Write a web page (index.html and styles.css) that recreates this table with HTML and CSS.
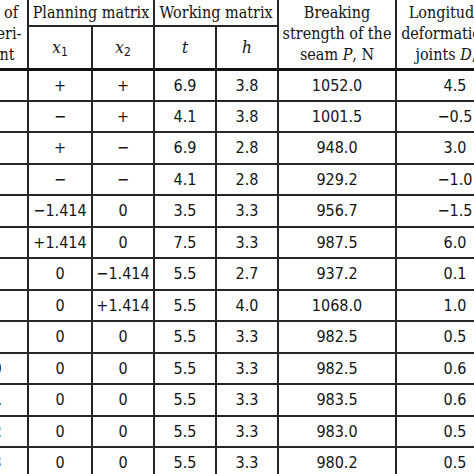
FILE: index.html
```html
<!DOCTYPE html>
<html>
<head>
<meta charset="utf-8">
<link rel="stylesheet" href="styles.css">
</head>
<body>
<table class="tbl">
  <colgroup>
    <col class="c-no"><col class="c-s"><col class="c-s2"><col class="c-s2"><col class="c-s2"><col class="c-w"><col class="c-w">
  </colgroup>
  <thead>
    <tr class="h1">
      <th rowspan="2" class="hd">No. of<br>experi-<br>ment</th>
      <th colspan="2" class="hd">Planning matrix</th>
      <th colspan="2" class="hd">Working matrix</th>
      <th rowspan="2" class="hd">Breaking<br>strength of the<br>seam <i>P</i>, N</th>
      <th rowspan="2" class="hd">Longitudinal<br>deformation of<br>joints <i>D</i>, %</th>
    </tr>
    <tr class="h2">
      <th class="var"><i>x</i><sub>1</sub></th>
      <th class="var"><i>x</i><sub>2</sub></th>
      <th class="var"><i>t</i></th>
      <th class="var"><i>h</i></th>
    </tr>
  </thead>
  <tbody>
    <tr><td class="num">1</td><td>+</td><td>+</td><td>6.9</td><td>3.8</td><td>1052.0</td><td>4.5</td></tr>
    <tr><td class="num">2</td><td>−</td><td>+</td><td>4.1</td><td>3.8</td><td>1001.5</td><td>−0.5</td></tr>
    <tr><td class="num">3</td><td>+</td><td>−</td><td>6.9</td><td>2.8</td><td>948.0</td><td>3.0</td></tr>
    <tr><td class="num">4</td><td>−</td><td>−</td><td>4.1</td><td>2.8</td><td>929.2</td><td>−1.0</td></tr>
    <tr><td class="num">5</td><td>−1.414</td><td>0</td><td>3.5</td><td>3.3</td><td>956.7</td><td>−1.5</td></tr>
    <tr><td class="num">6</td><td>+1.414</td><td>0</td><td>7.5</td><td>3.3</td><td>987.5</td><td>6.0</td></tr>
    <tr><td class="num">7</td><td>0</td><td>−1.414</td><td>5.5</td><td>2.7</td><td>937.2</td><td>0.1</td></tr>
    <tr><td class="num">8</td><td>0</td><td>+1.414</td><td>5.5</td><td>4.0</td><td>1068.0</td><td>1.0</td></tr>
    <tr><td class="num">9</td><td>0</td><td>0</td><td>5.5</td><td>3.3</td><td>982.5</td><td>0.5</td></tr>
    <tr><td class="num">10</td><td>0</td><td>0</td><td>5.5</td><td>3.3</td><td>982.5</td><td>0.6</td></tr>
    <tr><td class="num">11</td><td>0</td><td>0</td><td>5.5</td><td>3.3</td><td>983.5</td><td>0.6</td></tr>
    <tr><td class="num">12</td><td>0</td><td>0</td><td>5.5</td><td>3.3</td><td>983.0</td><td>0.5</td></tr>
    <tr><td class="num">13</td><td>0</td><td>0</td><td>5.5</td><td>3.3</td><td>980.2</td><td>0.5</td></tr>
  </tbody>
</table>
</body>
</html>
```
FILE: styles.css
```css
html, body {
  margin: 0;
  padding: 0;
  background: #fff;
  overflow: hidden;
}
.tbl {
  border-collapse: collapse;
  table-layout: fixed;
  width: 550px;
  margin-left: -37px;
  margin-top: -2px;
  color: #141414;
  font-family: "DejaVu Sans Condensed", "DejaVu Sans", sans-serif;
  font-size: 16px;
}
.c-no { width: 64px; }
.c-s { width: 64px; }
.c-s2 { width: 62px; }
.c-w { width: 118px; }
.tbl th, .tbl td {
  border: 2px solid #262626;
  padding: 0;
  text-align: center;
  vertical-align: middle;
  line-height: 21px;
}
.hd {
  font-family: "DejaVu Serif Condensed", "DejaVu Serif", serif;
  font-weight: normal;
  font-size: 16px;
}
.h1 { height: 27px; }
.h2 { height: 43px; }
.h2 th, .h1 th[rowspan] { border-bottom: 3px solid #111; }
.var {
  font-family: "DejaVu Serif Condensed", "DejaVu Serif", serif;
  font-weight: normal;
  font-size: 17px;
}
.var sub {
  font-family: "DejaVu Sans Condensed", "DejaVu Sans", sans-serif;
  font-size: 12px;
  vertical-align: -3px;
  line-height: 0;
}
.tbl tbody tr { height: 31.5px; }
.tbl td.num {
  font-weight: bold;
  padding-right: 9px;
}
```
